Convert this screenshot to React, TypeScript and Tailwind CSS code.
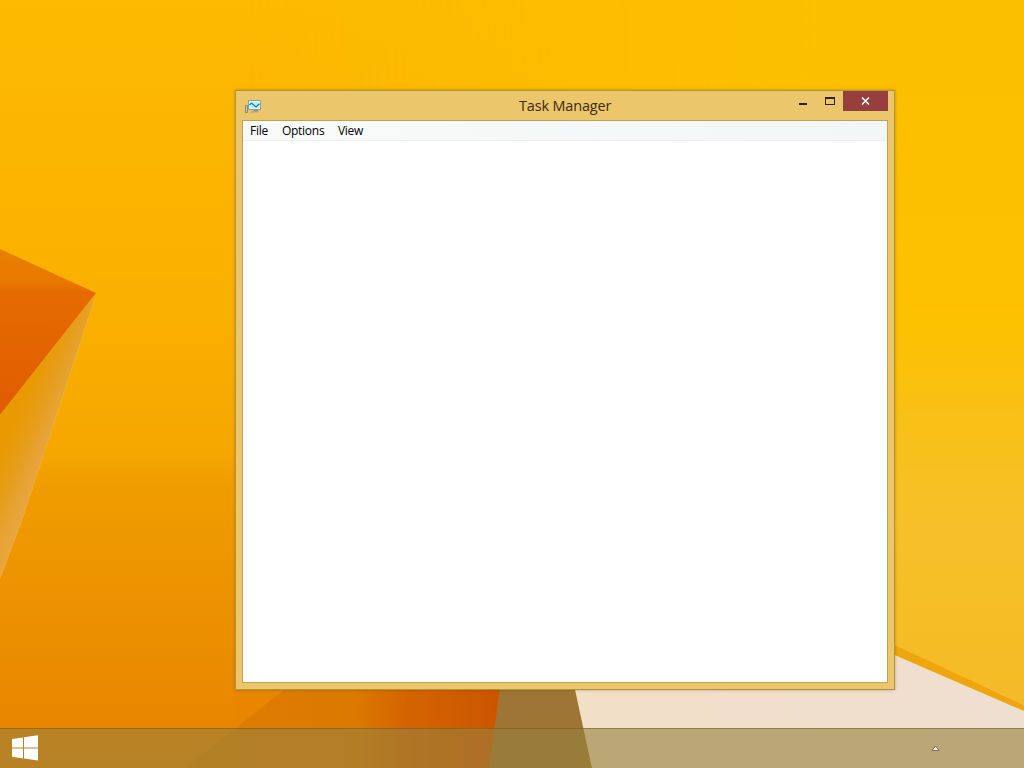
const menuItems = [
  { label: "File", width: "w-[18px]" },
  { label: "Options", width: "w-[42px]" },
  { label: "View", width: "w-[26px]" },
];

const Wallpaper = () => (
  <svg className="absolute inset-0" width="1024" height="768" viewBox="0 0 1024 768" aria-hidden="true">
    <defs>
      <linearGradient id="wall" x1="0" y1="0" x2="0" y2="1">
        <stop offset="0" stopColor="#fdba00" />
        <stop offset="0.2" stopColor="#fcb500" />
        <stop offset="0.42" stopColor="#f9af00" />
        <stop offset="0.59" stopColor="#f5a700" />
        <stop offset="0.63" stopColor="#f09d00" />
        <stop offset="0.78" stopColor="#ec9200" />
        <stop offset="1" stopColor="#e78200" />
      </linearGradient>
      <linearGradient id="right" x1="0" y1="0" x2="0" y2="1">
        <stop offset="0" stopColor="#fcbf00" />
        <stop offset="0.42" stopColor="#fcc100" />
        <stop offset="0.52" stopColor="#f9c012" />
        <stop offset="0.68" stopColor="#f7c02a" />
        <stop offset="0.8" stopColor="#f6bd26" />
        <stop offset="1" stopColor="#f5b829" />
      </linearGradient>
      <linearGradient id="fade" x1="0" y1="0" x2="1" y2="0">
        <stop offset="0.24" stopColor="#fff" stopOpacity="0" />
        <stop offset="0.8" stopColor="#fff" />
      </linearGradient>
      <mask id="fadeMask">
        <rect width="1024" height="768" fill="url(#fade)" />
      </mask>
      <linearGradient id="cubeTop" x1="0" y1="0" x2="0" y2="1">
        <stop offset="0" stopColor="#e98000" />
        <stop offset="0.2" stopColor="#e97800" />
        <stop offset="0.26" stopColor="#e56b00" />
        <stop offset="1" stopColor="#e05c00" />
      </linearGradient>
      <linearGradient id="cubeSide" gradientUnits="userSpaceOnUse" x1="14" y1="420" x2="58" y2="438">
        <stop offset="0" stopColor="#e99a02" />
        <stop offset="0.35" stopColor="#e69c15" />
        <stop offset="0.8" stopColor="#e7a43b" />
        <stop offset="1" stopColor="#eaa63a" />
      </linearGradient>
      <linearGradient id="shade" gradientUnits="userSpaceOnUse" x1="235" y1="0" x2="500" y2="0">
        <stop offset="0" stopColor="#dd7d00" />
        <stop offset="0.45" stopColor="#dc7900" />
        <stop offset="0.65" stopColor="#d46400" />
        <stop offset="1" stopColor="#cb5500" />
      </linearGradient>
      <linearGradient id="floor" gradientUnits="userSpaceOnUse" x1="575" y1="0" x2="1024" y2="0">
        <stop offset="0" stopColor="#f1dfc7" />
        <stop offset="1" stopColor="#efdfd0" />
      </linearGradient>
    </defs>
    <rect width="1024" height="768" fill="url(#wall)" />
    <rect width="1024" height="768" fill="url(#right)" mask="url(#fadeMask)" />
    <path d="M235 690H500V768H235z" fill="#e88600" />
    <path d="M0 249 96 293 0 415z" fill="url(#cubeTop)" />
    <path d="M96 294 0 415V579L22 520z" fill="url(#cubeSide)" />
    <path d="M95 298 60 405 22 520 0 578" fill="none" stroke="#f2b442" strokeOpacity="0.6" />
    <path d="M285 689H505V768H185z" fill="url(#shade)" />
    <path d="M501 680H573L592 768H489z" fill="#9f7535" />
    <path d="M573 680 592 768H1024V705L890 644V680z" fill="url(#floor)" />
    <path d="M890 643 1024 705V711L890 653z" fill="#eda60b" />
  </svg>
);

const TaskManagerIcon = () => (
  <svg width="16" height="16" viewBox="0 0 16 16" aria-hidden="true">
    <path d="M.5 6.5h2v7h-2z" fill="#c8c9b8" stroke="#918869" />
    <path d="M3.5 1.5h12v9h-12z" fill="#bdeef5" stroke="#7da3aa" />
    <path d="M4.5 2.5h10v7h-10z" fill="none" stroke="#e8fbfb" />
    <path d="M4.5 6 6.5 4l4.5 4 3.5-3.2" fill="none" stroke="#167d9d" strokeWidth="1.2" />
    <path d="M8 11h5v1.5H8z" fill="#9a977d" />
    <path d="M5 13h9" stroke="#aaa17c" />
  </svg>
);

const TitleBar = () => (
  <div className="flex h-[29px] items-start">
    <div className="ml-[9px] mt-[8px] w-4">
      <TaskManagerIcon />
    </div>
    <h1 className="flex-1 whitespace-nowrap pl-[258px] pt-[4px] text-[14.4px] leading-[22px] tracking-[-0.12px] text-[#3c2b12]">
      Task Manager
    </h1>
    <button className="flex h-5 w-[28px] justify-center pt-[12px]" aria-label="Minimize">
      <span className="h-[2px] w-2 bg-[#34200a]" />
    </button>
    <button className="flex h-5 w-[26px] justify-center pt-[6px]" aria-label="Maximize">
      <span className="h-2 w-[10px] border border-t-2 border-[#34200a]" />
    </button>
    <button className="mr-[6px] flex h-5 w-[45px] items-center justify-center bg-[#963f3d]" aria-label="Close">
      <svg width="9" height="8" viewBox="0 0 9 8">
        <path d="M1 .5 8 7.5M8 .5 1 7.5" stroke="#fff" strokeWidth="1.5" />
      </svg>
    </button>
  </div>
);

const MenuBar = () => (
  <nav className="flex h-5 gap-[14px] border-b border-[#ebefef] bg-gradient-to-r from-[#f9fafa] to-[#f2f6f6] pl-[7px] text-[12px] leading-[19px] tracking-[-0.28px] text-black">
    {menuItems.map((item) => (
      <button key={item.label} className={`${item.width} whitespace-nowrap text-left`}>
        {item.label}
      </button>
    ))}
  </nav>
);

const App = () => (
  <main className="relative flex h-[768px] w-[1024px] flex-col overflow-hidden font-['Open_Sans','Noto_Sans',sans-serif]">
    <Wallpaper />

    <div className="relative flex-1">
      <section className="absolute left-[235px] top-[90px] flex h-[600px] w-[660px] flex-col border border-[#b1923f] bg-[#ebc66a] shadow-[0_0_3px_rgba(90,60,0,0.35)]">
        <TitleBar />
        <div className="mx-[6px] mb-[6px] flex-1 border border-[#c2a250] bg-white">
          <MenuBar />
        </div>
      </section>
    </div>

    <footer className="relative flex h-10 items-center justify-between border-t border-[#6e5318]/50 bg-[#97803d]/60 pl-[12px] pr-[84px]">
      <button className="pb-[2px]" aria-label="Start">
        <svg width="26" height="26" viewBox="0 0 26 26" fill="#fff">
          <path d="M0 4.1 11 2.4V12.4H0zM12 2.2 26 .2V12.4H12zM0 13.4H11V23.4L0 21.8zM12 13.4H26V25.6L12 23.6z" />
        </svg>
      </button>
      <button aria-label="Show hidden icons">
        <svg width="9" height="7" viewBox="0 0 9 7">
          <path d="M4.5 1 8 5.5H1z" fill="#fff" stroke="#74513c" strokeWidth="0.8" />
        </svg>
      </button>
    </footer>
  </main>
);

export default App;
